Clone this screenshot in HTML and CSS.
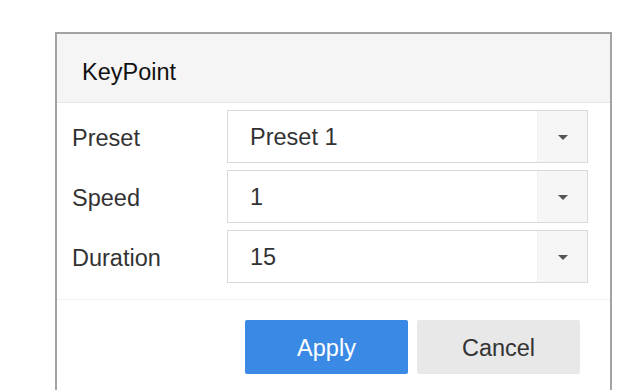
FILE: index.html
```html
<!DOCTYPE html>
<html lang="en">
<head>
    <meta charset="UTF-8">
    <meta name="viewport" content="width=device-width, initial-scale=1.0">
    <title>KeyPoint</title>
    <link rel="stylesheet" href="styles.css">
</head>
<body>
    <div class="dialog">
        <div class="dialog-header">KeyPoint</div>

        <div class="dialog-body">
            <div class="row">
                <label class="row-label">Preset</label>
                <div class="select">
                    <span class="select-value">Preset 1</span>
                    <span class="select-arrow"><i class="caret"></i></span>
                </div>
            </div>
            <div class="row">
                <label class="row-label">Speed</label>
                <div class="select">
                    <span class="select-value">1</span>
                    <span class="select-arrow"><i class="caret"></i></span>
                </div>
            </div>
            <div class="row">
                <label class="row-label">Duration</label>
                <div class="select">
                    <span class="select-value">15</span>
                    <span class="select-arrow"><i class="caret"></i></span>
                </div>
            </div>
        </div>

        <div class="dialog-footer">
            <button class="btn btn-primary">Apply</button>
            <button class="btn btn-default">Cancel</button>
        </div>
    </div>
</body>
</html>
```

FILE: styles.css
```css
html, body {
    height: 100%;
    overflow: hidden;
}

body {
    margin: 0;
    padding: 32px 0 0 55px;
    box-sizing: border-box;
    background: white;
    font-family: "Liberation Sans", Arial, sans-serif;
    color: #333;
}

.dialog {
    width: 553px;
    height: 356px;
    border: 2px solid #a3a3a3;
    border-bottom: none;
    background: white;
}

.dialog-header {
    height: 69px;
    line-height: 76px;
    padding-left: 25px;
    box-sizing: border-box;
    background: #f5f5f5;
    border-bottom: 1px solid #e6e6e6;
    font-size: 23.5px;
    color: #111;
}

.dialog-body {
    display: flex;
    flex-direction: column;
    gap: 7px;
    padding: 7px 22px 16px 15px;
    border-bottom: 1px dotted #e4e4e4;
}

.row {
    display: flex;
    align-items: center;
}

.row-label {
    width: 155px;
    font-size: 23.5px;
    color: #333;
    padding-top: 3px;
}

.select {
    flex: 1;
    display: flex;
    height: 53px;
    box-sizing: border-box;
    border: 1px solid #d9d9d9;
    background: white;
}

.select-value {
    flex: 1;
    padding-left: 22px;
    line-height: 53px;
    font-size: 23.5px;
    color: #333;
}

.select-arrow {
    width: 49px;
    display: flex;
    align-items: center;
    justify-content: center;
    background: #f6f6f6;
    border-left: 1px dotted #ececec;
}

.caret {
    width: 0;
    height: 0;
    border-left: 5px solid transparent;
    border-right: 5px solid transparent;
    border-top: 5px solid #555;
    margin-top: 1px;
}

.dialog-footer {
    display: flex;
    justify-content: flex-end;
    gap: 9px;
    padding: 20px 30px 0 0;
}

.btn {
    width: 163px;
    height: 54px;
    border: none;
    border-radius: 2px;
    font-family: "Liberation Sans", Arial, sans-serif;
    font-size: 23.5px;
    padding-top: 3px;
    cursor: pointer;
}

.btn-primary {
    background: #3a89e4;
    color: white;
}

.btn-default {
    background: #e8e8e8;
    color: #333;
}
```
